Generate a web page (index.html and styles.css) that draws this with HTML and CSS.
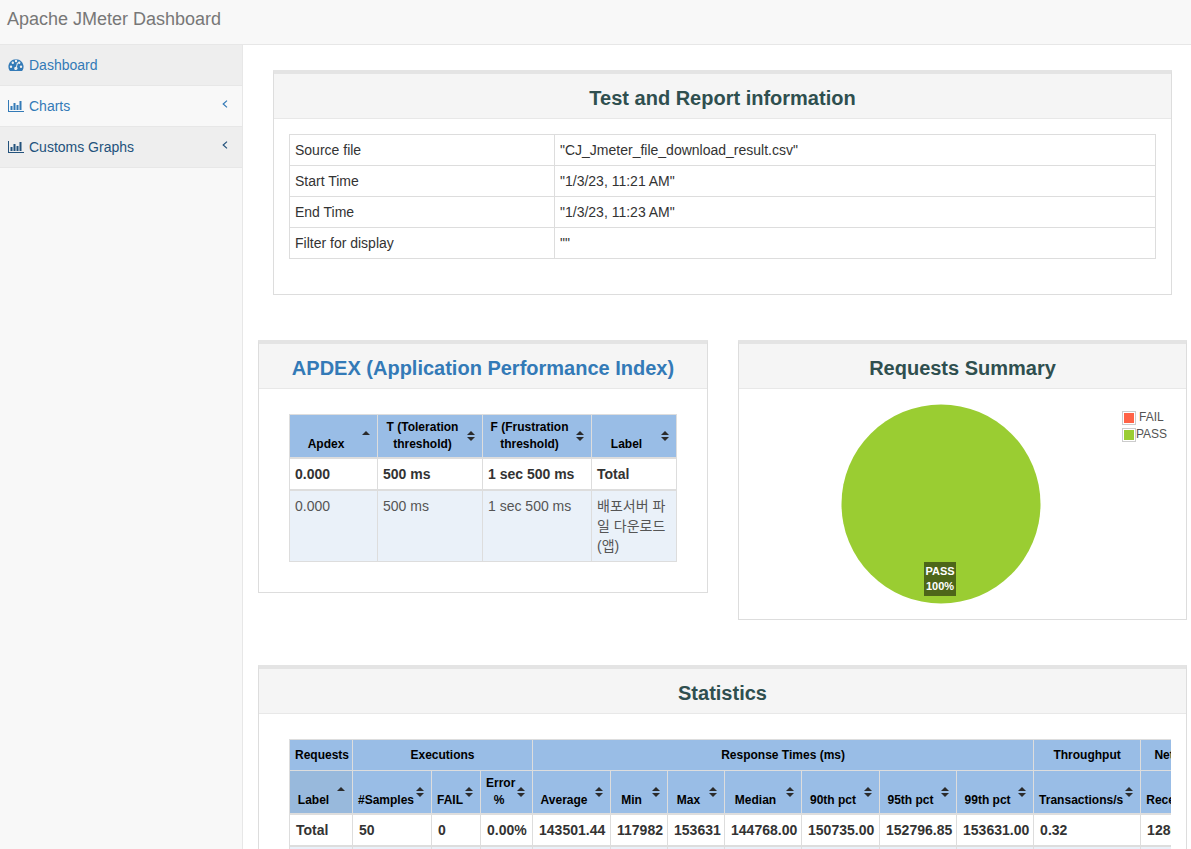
FILE: index.html
```html
<!DOCTYPE html>
<html lang="en">
<head>
<meta charset="utf-8">
<title>Apache JMeter Dashboard</title>
<link rel="stylesheet" href="styles.css">
</head>
<body>
<header class="navbar"><a class="brand">Apache JMeter Dashboard</a></header>
<div class="layout">
  <nav class="sidebar">
    <a class="nav-item active">
      <svg class="ico" viewBox="0 0 16 12" width="16" height="12"><path fill="currentColor" fill-rule="evenodd" d="M8 0.2C3.7 0.2 0.4 3.6 0.4 7.8c0 1.4.4 2.7 1.1 3.8.2.2.4.3.7.3h11.6c.3 0 .5-.1.7-.3.7-1.100 1.100-2.400 1.100-3.800C15.600 3.600 12.300.2 8 .2zM3 9a1.200 1.200 0 1 1 0-2.400A1.200 1.200 0 0 1 3 9zM4.800 5A1.200 1.200 0 1 1 4.800 2.600 1.200 1.200 0 0 1 4.800 5zM8 3.200A1.200 1.200 0 1 1 8 .8a1.200 1.200 0 0 1 0 2.400zM13 9a1.200 1.200 0 1 1 0-2.400A1.200 1.200 0 0 1 13 9zM11.200 5a1.200 1.200 0 1 1 0-2.400 1.200 1.200 0 0 1 0 2.400zM9.600 9.600a1.700 1.700 0 0 1-3.300.3 1.700 1.700 0 0 1 1.700-2.200L9 3.600l1 .3-1.100 4.200c.5.300.7.900.700 1.500z"/></svg>
      <span class="nav-label">Dashboard</span>
    </a>
    <a class="nav-item">
      <svg class="ico" viewBox="0 0 16 12" width="16" height="12"><path fill="currentColor" d="M0 0h1v11h15v1H0zM2.500 6h2v4h-2zM5.500 3h2v7h-2zM8.500 5h2v5h-2zM11.500 1h2v9h-2z"/></svg>
      <span class="nav-label">Charts</span>
      <svg class="chev" viewBox="0 0 6 8" width="6" height="8"><path fill="none" stroke="currentColor" stroke-width="1.200" d="M5 .6 1.200 4 5 7.400"/></svg>
    </a>
    <a class="nav-item open">
      <svg class="ico" viewBox="0 0 16 12" width="16" height="12"><path fill="currentColor" d="M0 0h1v11h15v1H0zM2.500 6h2v4h-2zM5.500 3h2v7h-2zM8.500 5h2v5h-2zM11.500 1h2v9h-2z"/></svg>
      <span class="nav-label">Customs Graphs</span>
      <svg class="chev" viewBox="0 0 6 8" width="6" height="8"><path fill="none" stroke="currentColor" stroke-width="1.200" d="M5 .6 1.200 4 5 7.400"/></svg>
    </a>
  </nav>
  <main class="content">
    <section class="panel panel-info">
      <h2 class="panel-heading">Test and Report information</h2>
      <div class="panel-body">
        <table class="tbl tbl-info">
          <colgroup><col class="ci1"><col class="ci2"></colgroup>
          <tbody>
            <tr><td>Source file</td><td>"CJ_Jmeter_file_download_result.csv"</td></tr>
            <tr><td>Start Time</td><td>"1/3/23, 11:21 AM"</td></tr>
            <tr><td>End Time</td><td>"1/3/23, 11:23 AM"</td></tr>
            <tr><td>Filter for display</td><td>""</td></tr>
          </tbody>
        </table>
      </div>
    </section>

    <div class="two-col">
      <section class="panel panel-apdex">
        <h2 class="panel-heading"><a class="title-link">APDEX (Application Performance Index)</a></h2>
        <div class="panel-body body-table">
          <table class="tbl tbl-apdex">
            <colgroup><col class="ca1"><col class="ca2"><col class="ca3"><col class="ca4"></colgroup>
            <thead>
              <tr>
                <th class="sortable">Apdex<i class="sort asc"></i></th>
                <th class="sortable">T (Toleration threshold)<i class="sort"></i></th>
                <th class="sortable">F (Frustration threshold)<i class="sort"></i></th>
                <th class="sortable">Label<i class="sort"></i></th>
              </tr>
            </thead>
            <tbody>
              <tr class="total"><td>0.000</td><td>500 ms</td><td>1 sec 500 ms</td><td>Total</td></tr>
              <tr class="odd"><td>0.000</td><td>500 ms</td><td>1 sec 500 ms</td><td>배포서버 파일 다운로드(앱)</td></tr>
            </tbody>
          </table>
        </div>
      </section>

      <section class="panel panel-summary">
        <h2 class="panel-heading">Requests Summary</h2>
        <div class="panel-body">
          <div class="chart">
            <svg class="pie" viewBox="0 0 200 200" width="200" height="200"><circle cx="100" cy="100" r="99.500" fill="#9acd32"/></svg>
            <div class="pie-label">PASS<br>100%</div>
            <ul class="legend">
              <li><i class="swatch fail"></i><span class="lg-fail">FAIL</span></li>
              <li><i class="swatch pass"></i><span>PASS</span></li>
            </ul>
          </div>
        </div>
      </section>
    </div>

    <section class="panel panel-stats">
      <h2 class="panel-heading">Statistics</h2>
      <div class="panel-body body-table">
        <div class="scroller">
          <table class="tbl tbl-stats">
            <colgroup>
              <col class="s1"><col class="s2"><col class="s3"><col class="s4"><col class="s5"><col class="s6"><col class="s6"><col class="s7"><col class="s8"><col class="s7"><col class="s7"><col class="s9"><col class="s10"><col class="s11">
            </colgroup>
            <thead>
              <tr class="group">
                <th>Requests</th>
                <th colspan="3">Executions</th>
                <th colspan="7">Response Times (ms)</th>
                <th>Throughput</th>
                <th colspan="2">Network (KB/sec)</th>
              </tr>
              <tr>
                <th class="sortable sorted">Label<i class="sort asc"></i></th>
                <th class="sortable">#Samples<i class="sort"></i></th>
                <th class="sortable">FAIL<i class="sort"></i></th>
                <th class="sortable">Error %<i class="sort"></i></th>
                <th class="sortable">Average<i class="sort"></i></th>
                <th class="sortable">Min<i class="sort"></i></th>
                <th class="sortable">Max<i class="sort"></i></th>
                <th class="sortable">Median<i class="sort"></i></th>
                <th class="sortable">90th pct<i class="sort"></i></th>
                <th class="sortable">95th pct<i class="sort"></i></th>
                <th class="sortable">99th pct<i class="sort"></i></th>
                <th class="sortable">Transactions/s<i class="sort"></i></th>
                <th class="sortable">Received<i class="sort"></i></th>
                <th class="sortable">Sent<i class="sort"></i></th>
              </tr>
            </thead>
            <tbody>
              <tr class="total"><td>Total</td><td>50</td><td>0</td><td>0.00%</td><td>143501.44</td><td>117982</td><td>153631</td><td>144768.00</td><td>150735.00</td><td>152796.85</td><td>153631.00</td><td>0.32</td><td>1280.00</td><td>0.05</td></tr>
              <tr class="odd"><td></td><td></td><td></td><td></td><td></td><td></td><td></td><td></td><td></td><td></td><td></td><td></td><td></td><td></td></tr>
            </tbody>
          </table>
        </div>
      </div>
    </section>
  </main>
</div>
</body>
</html>
```

FILE: styles.css
```css
* { box-sizing: border-box; }
html, body { margin: 0; height: 849px; overflow: hidden; }
body {
  font-family: "Liberation Sans", "Noto Sans CJK KR", sans-serif;
  font-size: 14px;
  line-height: 20px;
  color: #333;
  background: #fff;
  display: flex;
  flex-direction: column;
}
.navbar {
  flex: none;
  height: 45px;
  background: #f8f8f8;
  border-bottom: 1px solid #e7e7e7;
  padding: 9px 7px;
}
.brand { font-size: 18px; line-height: 20px; color: #777; }
.layout { flex: 1; display: flex; min-height: 0; }

.sidebar {
  flex: none;
  width: 243px;
  background: #f8f8f8;
  border-right: 1px solid #e7e7e7;
}
.nav-item {
  position: relative;
  display: flex;
  align-items: center;
  height: 41px;
  padding: 0 8px 1px;
  color: #337ab7;
  border-bottom: 1px solid #e7e7e7;
}
.nav-item.active { background: #eee; }
.nav-item.open { background: #eee; color: #23527c; }
.ico { flex: none; }
.nav-label { margin-left: 5px; }
.chev { position: absolute; left: 222px; top: 14px; }

.content {
  flex: 1;
  min-width: 0;
  padding: 25px 4px 0 15px;
  overflow: hidden;
}
.panel {
  background: #fff;
  border: 1px solid #ddd;
  border-top: 4px solid #e4e4e4;
}
.panel-info { margin: 0 15px 45px; }
.panel-heading {
  margin: 0;
  padding: 13px 15px 9px;
  height: 45px;
  background: #f5f5f5;
  border-bottom: 1px solid #e8e8e8;
  font-size: 20px;
  line-height: 22px;
  font-weight: 700;
  text-align: center;
  color: #2f4f4f;
}
.title-link { color: #337ab7; }
.panel-body { padding: 15px; }
.body-table { padding: 25px 15px 15px 30px; }

.tbl { border-collapse: collapse; table-layout: fixed; }
.tbl td, .tbl th { border: 1px solid #ddd; padding: 5px; vertical-align: top; }
.tbl th {
  position: relative;
  font-size: 12px;
  line-height: 17px;
  color: #000;
  background: #99bde6;
  text-align: center;
  vertical-align: bottom;
}
.tbl thead tr:last-child th { border-bottom: 2px solid #ddd; padding-top: 4px; padding-bottom: 4px; }
.tbl .sortable { padding-right: 20px; }
.tbl .sorted { background: #98b9dc; }
.total td { font-weight: 700; background: #fff; }
.tbl-apdex .total td, .tbl-stats .total td { border-bottom: 2px solid #ddd; }
.odd td { background: #eaf1f9; color: #555; }

.sort {
  position: absolute;
  right: 7px;
  top: 50%;
  width: 8px;
  height: 10px;
  margin-top: -5px;
}
.sort::before, .sort::after {
  content: "";
  position: absolute;
  left: 0;
  border-left: 4px solid transparent;
  border-right: 4px solid transparent;
}
.sort::before { top: 0; border-bottom: 4px solid #2b2b2b; }
.sort::after { bottom: 0; border-top: 4px solid #2b2b2b; }
.sort.asc::after { display: none; }

.tbl-info { width: 866px; margin-bottom: 20px; }
.ci1 { width: 265px; }
.ci2 { width: 601px; }

.two-col { display: flex; gap: 30px; align-items: flex-start; margin-bottom: 45px; }
.panel-apdex { width: 450px; flex: none; }
.panel-summary { width: 449px; flex: none; }
.tbl-apdex { width: 387px; margin-bottom: 15px; }
.ca1 { width: 88px; }
.ca2 { width: 105px; }
.ca3 { width: 109px; }
.ca4 { width: 85px; }

.chart { position: relative; height: 200px; }
.pie { position: absolute; left: 87px; top: 0; }
.pie-label {
  position: absolute;
  left: 170px;
  top: 158px;
  width: 32px;
  height: 34px;
  background: #4d6619;
  color: #fff;
  font-size: 11px;
  font-weight: 700;
  line-height: 15px;
  text-align: center;
  padding-top: 2px;
}
.legend {
  position: absolute;
  left: 368px;
  top: 5px;
  margin: 0;
  padding: 0;
  list-style: none;
  font-size: 12px;
  line-height: 17px;
  color: #545454;
}
.legend li { display: flex; align-items: center; height: 17px; }
.swatch { display: block; width: 14px; height: 14px; border: 1px solid #ccc; padding: 1px; background-clip: content-box; }
.swatch.fail { background-color: #ff6347; }
.swatch.pass { background-color: #9acd32; }
.lg-fail { margin-left: 3px; }

.scroller { overflow: hidden; }
.tbl-stats { width: 978px; }
.tbl-stats .group th { padding: 7px 5px 6px; vertical-align: middle; }
.tbl-stats td { padding: 5px 5px 5px 6px; }
.s1 { width: 63px; }
.s2 { width: 79px; }
.s3 { width: 49px; }
.s4 { width: 52px; }
.s5 { width: 78px; }
.s6 { width: 57px; }
.s7 { width: 77px; }
.s8 { width: 78px; }
.s9 { width: 107px; }
.s10 { width: 79px; }
.s11 { width: 48px; }
```
